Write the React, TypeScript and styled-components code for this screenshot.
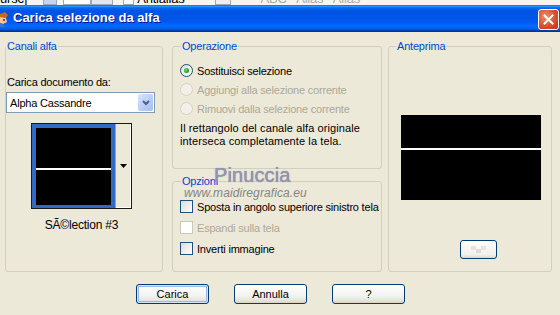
import styled, { createGlobalStyle } from "styled-components";

const GlobalStyle = createGlobalStyle`
  html, body {
    margin: 0;
    padding: 0;
    background: #ece9d8;
  }
`;

const Window = styled.div`
  position: relative;
  width: 560px;
  height: 315px;
  overflow: hidden;
  background: #ece9d8;
  color: #000;
  font-family: "Liberation Sans", Arial, sans-serif;
  font-size: 11px;
  letter-spacing: -0.2px;
`;

// piece of the host app toolbar peeking above the dialog
const TopStrip = styled.div`
  height: 5px;
  display: flex;
  align-items: flex-end;
  overflow: hidden;
  background: #f6f5f0;
`;

const StripText = styled.span<{ $left?: number; $faint?: boolean }>`
  margin-left: ${(p) => p.$left ?? 0}px;
  font-size: 13px;
  line-height: 13px;
  color: ${(p) => (p.$faint ? "#a9a9a9" : "#000")};
  white-space: nowrap;
`;

const StripBox = styled.span<{ $left?: number; $w: number; $bg: string }>`
  margin-left: ${(p) => p.$left ?? 0}px;
  width: ${(p) => p.$w}px;
  height: 14px;
  flex-shrink: 0;
  box-sizing: border-box;
  border: 1px solid #9aa7c0;
  background: ${(p) => p.$bg};
`;

const TitleBar = styled.div`
  height: 27px;
  display: flex;
  align-items: center;
  background: linear-gradient(
    #0058ee 0%,
    #3593ff 4%,
    #288eff 6%,
    #127dff 8%,
    #036ffc 10%,
    #0262ee 14%,
    #0057e5 20%,
    #0054e3 24%,
    #0055eb 56%,
    #005bf5 66%,
    #026afe 76%,
    #0062ef 86%,
    #0052d6 92%,
    #0040ab 94%,
    #003092 100%
  );
`;

const TitleText = styled.span`
  margin-left: 4px;
  margin-top: -2px;
  color: #fff;
  font-weight: bold;
  font-size: 13px;
  letter-spacing: 0;
  text-shadow: 1px 1px #0f1089;
`;

const CloseButton = styled.div`
  margin-left: auto;
  margin-right: 1px;
  margin-top: 2px;
  width: 21px;
  height: 21px;
  box-sizing: border-box;
  border: 1px solid #fff;
  border-radius: 3px;
  background: radial-gradient(circle at 35% 35%, #f08b6c, #dc5030 55%, #b53516);
  display: flex;
  align-items: center;
  justify-content: center;
`;

const Body = styled.div`
  display: flex;
  flex-direction: column;
  padding: 8px 0 0 5px;
`;

const Columns = styled.div`
  display: flex;
  align-items: flex-start;
`;

const Column = styled.div`
  display: flex;
  flex-direction: column;
  gap: 6px;
  margin-right: 6px;
`;

const Group = styled.fieldset<{ $w: number; $h: number; $mr?: number; $pl?: number }>`
  box-sizing: border-box;
  width: ${(p) => p.$w}px;
  height: ${(p) => p.$h}px;
  margin: 0 ${(p) => p.$mr ?? 0}px 0 0;
  padding: 0 0 0 ${(p) => p.$pl ?? 0}px;
  min-width: 0;
  border: 1px solid #d0d0bf;
  border-radius: 3px;
  display: flex;
  flex-direction: column;
  align-items: flex-start;
`;

const Legend = styled.legend<{ $ml?: number }>`
  margin-left: ${(p) => p.$ml ?? 0}px;
  padding: 0 1px;
  color: #0046d5;
  font-size: 11px;
  line-height: 13px;
`;

const Label = styled.div<{ $mt?: number }>`
  margin-top: ${(p) => p.$mt ?? 0}px;
  padding-left: 1px;
  line-height: 13px;
`;

const Select = styled.div`
  margin-top: 3px;
  width: 149px;
  height: 21px;
  box-sizing: border-box;
  border: 1px solid #7f9db9;
  background: #fff;
  display: flex;
  align-items: center;
  padding-left: 3px;
`;

const SelectArrow = styled.div`
  margin-left: auto;
  margin-right: 1px;
  width: 15px;
  height: 17px;
  border-radius: 2px;
  background: linear-gradient(135deg, #dce6fd, #b6cbf6 60%, #a8bff2);
  display: flex;
  align-items: center;
  justify-content: center;
`;

const Thumb = styled.div`
  margin: 10px 0 0 25px;
  width: 101px;
  height: 86px;
  box-sizing: border-box;
  border: 1px solid #1a1a1a;
  display: flex;
  background: #fff;
`;

const ThumbSel = styled.div`
  width: 83px;
  box-sizing: border-box;
  padding: 4px 4px 3px 4px;
  background: #316ac5;
  display: flex;
`;

const Picture = styled.div<{ $w?: number; $h?: number; $line: number; $ml?: number }>`
  flex: ${(p) => (p.$w ? "none" : "1")};
  width: ${(p) => (p.$w ? `${p.$w}px` : "auto")};
  height: ${(p) => (p.$h ? `${p.$h}px` : "auto")};
  margin-left: ${(p) => p.$ml ?? 0}px;
  background: linear-gradient(
    #000 0 ${(p) => p.$line}px,
    #fff ${(p) => p.$line}px ${(p) => p.$line + 2}px,
    #000 ${(p) => p.$line + 2}px
  );
`;

const ThumbDrop = styled.div`
  flex: 1;
  background: #ece9d8;
  border-left: 1px solid #a0a0a0;
  box-shadow: inset -1px -1px 0 #fff;
  display: flex;
  align-items: center;
  justify-content: center;
`;

const Caption = styled.div`
  margin: 10px 0 0 25px;
  width: 101px;
  text-align: center;
  line-height: 13px;
  font-size: 12px;
`;

const OptionRow = styled.div<{ $h: number; $disabled?: boolean }>`
  height: ${(p) => p.$h}px;
  display: flex;
  align-items: center;
  gap: 4px;
  color: ${(p) => (p.$disabled ? "#aca899" : "#000")};
  white-space: nowrap;
`;

const RadioCircle = styled.span<{ $disabled?: boolean }>`
  width: 13px;
  height: 13px;
  box-sizing: border-box;
  border-radius: 50%;
  border: 1px solid ${(p) => (p.$disabled ? "#d5d2c6" : "#1c5180")};
  background: ${(p) => (p.$disabled ? "#f2f0e8" : "linear-gradient(135deg, #dcdcd7, #fff)")};
  display: flex;
  align-items: center;
  justify-content: center;
`;

const RadioDot = styled.span`
  width: 5px;
  height: 5px;
  border-radius: 50%;
  background: radial-gradient(circle at 40% 40%, #7be07a, #21a121 60%, #178717);
`;

const CheckBox = styled.span<{ $disabled?: boolean }>`
  width: 13px;
  height: 13px;
  box-sizing: border-box;
  border: 1px solid ${(p) => (p.$disabled ? "#cac8bb" : "#1c5180")};
  background: ${(p) => (p.$disabled ? "#fff" : "linear-gradient(135deg, #dcdcd7, #fff)")};
`;

const Note = styled.div`
  margin-top: 4px;
  line-height: 13px;
  letter-spacing: 0.1px;
`;

const PreviewWrap = styled.div`
  align-self: stretch;
  display: flex;
  flex-direction: column;
  align-items: flex-start;
`;

const SmallButton = styled.div`
  margin: 40px 0 0 71px;
  width: 37px;
  height: 19px;
  box-sizing: border-box;
  border: 1px solid #003c74;
  border-radius: 3px;
  background: linear-gradient(#fff, #f1f0ec 80%, #dcd8cc);
  display: flex;
  align-items: center;
  justify-content: center;
`;

const ButtonRow = styled.div`
  margin-top: 12px;
  padding-left: 131px;
  display: flex;
  gap: 25px;
`;

const Button = styled.button<{ $default?: boolean }>`
  width: 73px;
  height: 20px;
  padding: 0;
  box-sizing: border-box;
  border: 1px solid #003c74;
  border-radius: 3px;
  background: linear-gradient(#fff, #f3f3ef 60%, #e3e1d8 90%, #d6d0c5);
  box-shadow: ${(p) =>
    p.$default ? "inset 0 0 0 1px #cee7ff, inset 0 0 0 2px #98b8ea" : "none"};
  font-family: "Liberation Sans", Arial, sans-serif;
  font-size: 11px;
  color: #000;
`;

const Watermark = styled.div`
  position: absolute;
  left: 214px;
  top: 165px;
  font-size: 20px;
  line-height: 20px;
  letter-spacing: 0.1px;
  color: #9494b0;
  text-shadow: 0 0 1px #7c7c9a;
  pointer-events: none;
`;

const WatermarkUrl = styled.div`
  position: absolute;
  left: 184px;
  top: 187px;
  font-size: 12px;
  line-height: 12px;
  font-style: italic;
  letter-spacing: 0.1px;
  color: #858585;
  pointer-events: none;
`;

const AppIcon = () => (
  <svg width="9" height="16" viewBox="0 0 9 16">
    <path d="M0 3 L5 1 L8 4 L6 7 L0 6 Z" fill="#c46a1c" />
    <path d="M0 6 L6 7 L7 11 L3 13 L0 12 Z" fill="#f2c89a" />
    <path d="M0 12 L3 13 L5 16 L0 16 Z" fill="#3b6fd0" />
    <circle cx="4" cy="9" r="0.9" fill="#222" />
  </svg>
);

const Chevron = () => (
  <svg width="8" height="6" viewBox="0 0 8 6">
    <polyline points="1,1 4,4 7,1" fill="none" stroke="#4d6185" strokeWidth="2" />
  </svg>
);

const DownTriangle = () => (
  <svg width="7" height="4" viewBox="0 0 7 4">
    <polygon points="0,0 7,0 3.5,4" fill="#000" />
  </svg>
);

const CloseX = () => (
  <svg width="11" height="11" viewBox="0 0 11 11">
    <path d="M1.5 1.5 L9.5 9.5 M9.5 1.5 L1.5 9.5" stroke="#fff" strokeWidth="2" strokeLinecap="square" />
  </svg>
);

const Checker = () => (
  <svg width="22" height="11" viewBox="0 0 22 11">
    <rect x="3" y="2" width="5" height="4" fill="#e4e4e4" />
    <rect x="13" y="2" width="5" height="4" fill="#e4e4e4" />
    <rect x="8" y="5" width="5" height="4" fill="#dcdcdc" />
  </svg>
);

const Radio = ({ label, checked, disabled }: { label: string; checked?: boolean; disabled?: boolean }) => (
  <OptionRow $h={19} $disabled={disabled}>
    <RadioCircle $disabled={disabled}>{checked && <RadioDot />}</RadioCircle>
    {label}
  </OptionRow>
);

const Check = ({ label, disabled }: { label: string; disabled?: boolean }) => (
  <OptionRow $h={21} $disabled={disabled}>
    <CheckBox $disabled={disabled} />
    {label}
  </OptionRow>
);

const App = () => {
  return (
    <Window>
      <GlobalStyle />
      <TopStrip>
        <StripText>ursc]</StripText>
        <StripBox $left={16} $w={14} $bg="#c8d4ee" />
        <StripBox $left={6} $w={28} $bg="#fff" />
        <StripBox $left={0} $w={22} $bg="#e2e6ef" />
        <StripBox $left={10} $w={11} $bg="#fff" />
        <StripText $left={3}>Antialias</StripText>
        <StripBox $left={30} $w={16} $bg="#eeeeee" />
        <StripText $left={30} $faint>
          ABC &nbsp; Alias &nbsp; Alias
        </StripText>
      </TopStrip>

      <TitleBar>
        <AppIcon />
        <TitleText>Carica selezione da alfa</TitleText>
        <CloseButton>
          <CloseX />
        </CloseButton>
      </TitleBar>

      <Body>
        <Columns>
          <Group $w={158} $h={232} $mr={9}>
            <Legend>Canali alfa</Legend>
            <Label $mt={23}>Carica documento da:</Label>
            <Select>
              Alpha Cassandre
              <SelectArrow>
                <Chevron />
              </SelectArrow>
            </Select>
            <Thumb>
              <ThumbSel>
                <Picture $line={40} />
              </ThumbSel>
              <ThumbDrop>
                <DownTriangle />
              </ThumbDrop>
            </Thumb>
            <Caption>SÃ©lection #3</Caption>
          </Group>

          <Column>
            <Group $w={210} $h={129} $pl={7}>
              <Legend $ml={1}>Operazione</Legend>
              <OptionRow $h={8} />
              <Radio label="Sostituisci selezione" checked />
              <Radio label="Aggiungi alla selezione corrente" disabled />
              <Radio label="Rimuovi dalla selezione corrente" disabled />
              <Note>
                Il rettangolo del canale alfa originale
                <br />
                interseca completamente la tela.
              </Note>
            </Group>
            <Group $w={210} $h={97} $pl={7}>
              <Legend $ml={1}>Opzioni</Legend>
              <OptionRow $h={8} />
              <Check label="Sposta in angolo superiore sinistro tela" />
              <Check label="Espandi sulla tela" disabled />
              <Check label="Inverti immagine" />
            </Group>
          </Column>

          <Group $w={164} $h={232} $pl={0}>
            <Legend $ml={7}>Anteprima</Legend>
            <PreviewWrap>
              <OptionRow $h={62} />
              <Picture $w={140} $h={85} $line={33} $ml={12} />
              <SmallButton>
                <Checker />
              </SmallButton>
            </PreviewWrap>
          </Group>
        </Columns>

        <ButtonRow>
          <Button $default>Carica</Button>
          <Button>Annulla</Button>
          <Button>?</Button>
        </ButtonRow>
      </Body>

      <Watermark>Pinuccia</Watermark>
      <WatermarkUrl>www.maidiregrafica.eu</WatermarkUrl>
    </Window>
  );
};

export default App;
